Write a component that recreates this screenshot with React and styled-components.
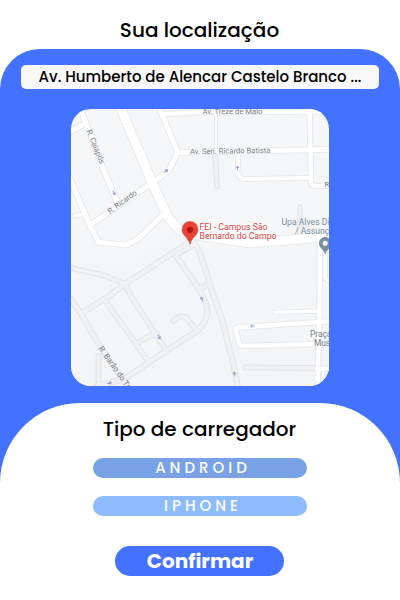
import React from "react";
import styled, { createGlobalStyle } from "styled-components";

const GlobalStyle = createGlobalStyle`
  * { box-sizing: border-box; }
  body { margin: 0; background: #fff; }
`;

const Screen = styled.main`
  width: 400px;
  height: 600px;
  display: flex;
  flex-direction: column;
  overflow: hidden;
  background: #fff;
  color: #000;
  font-family: Poppins, Inter, sans-serif;
`;

const Header = styled.header`
  flex: none;
  height: 49px;
  padding: 15px 1px 0 0;
  text-align: center;
`;

const Title = styled.h1`
  margin: 0;
  font-size: 20px;
  line-height: 30px;
  font-weight: 500;
  white-space: nowrap;
`;

const SheetTitle = styled(Title).attrs({ as: "h2" })`
  padding-right: 1px;
`;

const LocationPanel = styled.section`
  flex: none;
  height: 354px;
  padding-top: 16px;
  display: flex;
  flex-direction: column;
  align-items: center;
  gap: 20px;
  background: #4272ff;
  border-radius: 40px 40px 0 0;
`;

const Address = styled.div`
  width: 358px;
  height: 24px;
  flex: none;
  border-radius: 5px;
  background: #f8f8f8;
  font-size: 15px;
  font-weight: 500;
  line-height: 24px;
  text-align: center;
  white-space: nowrap;
`;

const MapCard = styled.div`
  width: 258px;
  height: 277px;
  flex: none;
  overflow: hidden;
  border-radius: 20px;
  background: #f5f6f8;

  svg { display: block; }
`;

const SheetBackdrop = styled.div`
  flex: 1;
  background: #4272ff;
`;

const ChargerSheet = styled.section`
  height: 100%;
  padding-top: 11px;
  display: flex;
  flex-direction: column;
  align-items: center;
  border-radius: 80px 80px 0 0;
  background: #fff;
`;

const Options = styled.div`
  margin-top: 14px;
  display: flex;
  flex-direction: column;
  gap: 18px;
`;

const Option = styled.button`
  width: 214px;
  height: 20px;
  padding: 0 0 0 6px;
  border: 0;
  border-radius: 10px;
  background: ${(p) => p.$color};
  color: #fff;
  font: 500 15px/20px Poppins, Inter, sans-serif;
  letter-spacing: 4px;
`;

const Confirm = styled.button`
  width: 169px;
  height: 30px;
  margin: 30px 2px 0 0;
  padding: 0 0 0 2px;
  border: 0;
  border-radius: 15px;
  background: #4272ff;
  color: #fff;
  font: 700 20px/30px Poppins, Inter, sans-serif;
`;

const Label = styled.text`
  font-family: Roboto, sans-serif;
  font-size: ${(p) => p.$size || 7.6}px;
  fill: ${(p) => p.$color || "#777b80"};
`;

const greyRoads = [
  ["M71 268L106 276L125 284", 4],
  ["M71 299L81 314L99 345L129 389", 4.5],
  ["M81 314L109 296L125 284L193 240", 4.5],
  ["M125 284L132 298L166 350", 4],
  ["M104 299L148 361", 4],
  ["M136 344L149 336L157 334", 4],
  ["M98 386L124 379L166 351L197 331Q212 318 205 301L199 289L174 253", 4.5],
  ["M176 255L192 246", 4],
  ["M193 239L200 253L212 291L222 320L233 362L238 388", 4.5],
  ["M200 289L207 285", 4],
  ["M173 321Q183 312 188 320L197 331", 4],
  ["M98.5 356V388", 4],
  ["M215 153L217 186", 4],
  ["M300 207V236", 3.5],
  ["M245 367.5L317 368", 4],
];

const whiteRoads = [
  ["M80 106L87 126L104 171L118 204", 5],
  ["M69 132.5L85 123.5", 5],
  ["M69 176L79 200L91 228L99 242.5L126 245L138 239L166 212", 5],
  ["M75 215.5L83 214.5", 3.5],
  ["M90 225L152.7 182.5L169 170.5L177.5 152.5L240 151L330 149.5", 5],
  ["M177.5 152L161 112L159 107", 5],
  ["M163 114.5L200 112L330 111.5", 4.5],
  ["M309.5 107L311 181Q311 186 316 186H330", 4.5],
  ["M238.5 152L237.5 174L242 179L310 178", 4],
  ["M216 112V151", 1.8],
  ["M325 250V278L331 282", 3.5],
  ["M320 240L319.5 310L317.5 388", 4.5],
  ["M274 312.3L320 311", 3.5],
  ["M331 321.5L320 322L237 327.5Q235 328 236 331L240 346L317 344", 4.5],
  ["M317 369L331 369", 4.5],
  ["M119 104L152.7 184L166 213Q171 223 180 230Q187 235 199 235.5L250 243L318 237.5L331 237", 9],
];

const arrows = [
  [114, 193, 65], [166, 171, -35], [237.5, 168, -90], [159, 337, 60],
  [202, 299, -115], [252.5, 326, 180], [234.5, 374, -105], [109.5, 383, -10],
];

function Roads({ roads, edge, fill }) {
  return (
    <g fill="none" strokeLinecap="round" strokeLinejoin="round">
      {roads.map(([d, w]) => <path key={d} d={d} stroke={edge} strokeWidth={w + 1.6} />)}
      {roads.map(([d, w]) => <path key={d} d={d} stroke={fill} strokeWidth={w} />)}
    </g>
  );
}

function CampusMap() {
  return (
    <svg width="258" height="277" viewBox="71 109 258 277" role="img" aria-label="Mapa">
      <path d="M71 264L139 261L165 238L200 244L329 240V386H71Z" fill="#f4f5f7" />
      <Roads roads={greyRoads} edge="#dfe0e2" fill="#f0f1f2" />
      <Roads roads={whiteRoads} edge="#e3e5e8" fill="#fff" />
      <g fill="none" stroke="#9a9fc6" strokeWidth="1">
        {arrows.map(([x, y, a]) => (
          <path key={`${x}-${y}`} transform={`translate(${x} ${y}) rotate(${a})`} d="M-2.5 0H2M0-1.5L2 0L0 1.5" />
        ))}
      </g>
      <Label x="202.5" y="113.8" textLength="60" lengthAdjust="spacingAndGlyphs">Av. Treze de Maio</Label>
      <Label x="190" y="154.2" textLength="80.5" lengthAdjust="spacingAndGlyphs" transform="rotate(-1 190 154)">Av. Sen. Ricardo Batista</Label>
      <Label x="86.5" y="131" textLength="36" lengthAdjust="spacingAndGlyphs" transform="rotate(68 86.5 131)">R. Caiapós</Label>
      <Label x="110" y="214" textLength="34" lengthAdjust="spacingAndGlyphs" transform="rotate(-36 110 214)">R. Ricardo</Label>
      <Label x="98.5" y="348.5" textLength="49" lengthAdjust="spacingAndGlyphs" transform="rotate(55 98.5 348.5)">R. Barão do Tr</Label>
      <Label x="324.5" y="187.3">R</Label>
      <Label x="281.5" y="225" $size={8.6} $color="#78909c" textLength="48" lengthAdjust="spacingAndGlyphs">Upa Alves Di</Label>
      <Label x="295" y="233.8" $size={8.6} $color="#78909c">/ Assunç</Label>
      <Label x="310" y="337.3" $size={8.3} $color="#718087">Praça</Label>
      <Label x="314" y="346.2" $size={8.3} $color="#718087">Mus</Label>
      <g stroke="#fff" strokeWidth="1.5" paintOrder="stroke">
        <Label x="199.5" y="230.4" $size={8.6} $color="#d93f3b" textLength="68" lengthAdjust="spacingAndGlyphs">FEI - Campus São</Label>
        <Label x="199.5" y="239.2" $size={8.6} $color="#d93f3b" textLength="77" lengthAdjust="spacingAndGlyphs">Bernardo do Campo</Label>
      </g>
      <path d="M190 244.3C189 237.8 182 235.5 182 229.4A8 8 0 0 1 198 229.4C198 235.5 191 237.8 190 244.3Z" fill="#ea4335" stroke="#d33b30" strokeWidth=".5" />
      <circle cx="190" cy="229.8" r="3.1" fill="#b31412" />
      <path d="M325.2 254.7C324.5 250 319 248 319 243.2A6.2 6.2 0 0 1 331.4 243.2C331.4 248 326 250 325.2 254.7Z" fill="#78909c" />
      <circle cx="325.2" cy="243.3" r="2.5" fill="#fff" />
    </svg>
  );
}

export default function App() {
  return (
    <Screen>
      <GlobalStyle />
      <Header><Title>Sua localização</Title></Header>
      <LocationPanel>
        <Address>Av. Humberto de Alencar Castelo Branco ...</Address>
        <MapCard><CampusMap /></MapCard>
      </LocationPanel>
      <SheetBackdrop>
        <ChargerSheet>
          <SheetTitle>Tipo de carregador</SheetTitle>
          <Options>
            <Option $color="#79a2e6">ANDROID</Option>
            <Option $color="#8dbbfb">IPHONE</Option>
          </Options>
          <Confirm>Confirmar</Confirm>
        </ChargerSheet>
      </SheetBackdrop>
    </Screen>
  );
}
